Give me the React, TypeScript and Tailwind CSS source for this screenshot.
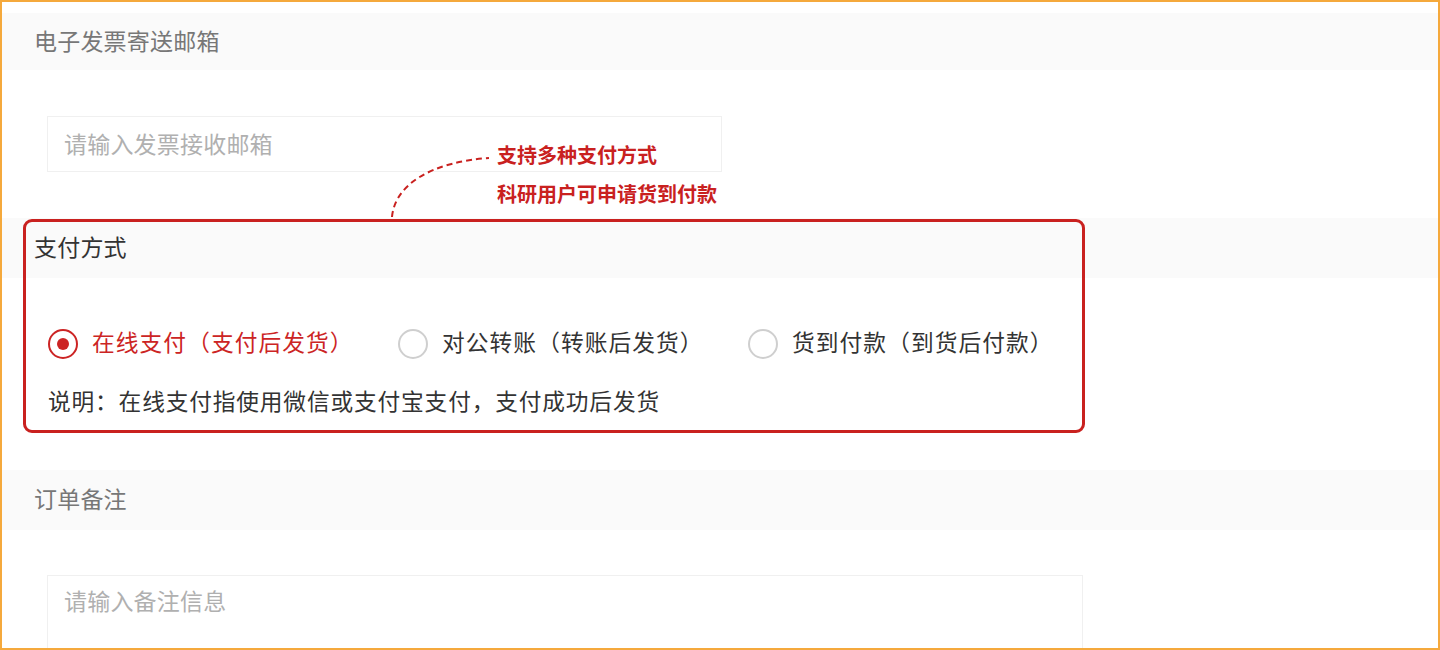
import React, { useState } from 'react';

const options = [
  { id: 'online', label: '在线支付（支付后发货）' },
  { id: 'transfer', label: '对公转账（转账后发货）' },
  { id: 'cod', label: '货到付款（到货后付款）' },
];

const SectionHeader: React.FC<{ title: string; dark?: boolean; tall?: boolean }> = ({ title, dark, tall }) => (
  <div
    className={`flex items-center bg-[#fafafa] pl-[32px] pb-[3px] ${tall ? 'h-[60px]' : 'h-[57px]'} ${
      dark ? 'text-[#333]' : 'text-[#777]'
    } text-[23px] leading-none tracking-[0.2px]`}
  >
    {title}
  </div>
);

const App: React.FC = () => {
  const [payment, setPayment] = useState('online');

  return (
    <div
      lang="zh-CN"
      className="relative w-[1440px] h-[650px] overflow-hidden border-2 border-[#f5a93c] bg-white font-['Noto_Sans_CJK_SC',sans-serif]"
    >
      {/* 电子发票 */}
      <div className="pt-[11px]">
        <SectionHeader title="电子发票寄送邮箱" />
        <div className="pl-[45px] py-[46px]">
          <input
            placeholder="请输入发票接收邮箱"
            className="w-[675px] h-[56px] border border-[#f0f0f0] px-[16px] pb-[3px] text-[23px] tracking-[0.2px] text-[#333] placeholder:text-[#b0b0b0] outline-none"
          />
        </div>
      </div>

      {/* 支付方式 */}
      <div>
        <SectionHeader title="支付方式" dark tall />
        <div className="pl-[46px] pt-[51px] pb-[52px]">
          <div className="flex">
            {options.map((opt) => {
              const active = payment === opt.id;
              return (
                <button
                  key={opt.id}
                  onClick={() => setPayment(opt.id)}
                  className="flex w-[350px] items-center gap-[14px] text-left"
                >
                  <span
                    className={`flex h-[30px] w-[30px] shrink-0 items-center justify-center rounded-full border-2 ${
                      active ? 'border-[#cc2424]' : 'border-[#cfcfcf]'
                    }`}
                  >
                    {active && <span className="h-[12px] w-[12px] rounded-full bg-[#cc2424]" />}
                  </span>
                  <span
                    className={`pb-[3px] text-[22.7px] leading-none tracking-[1.1px] ${
                      active ? 'text-[#cc2424]' : 'text-[#333]'
                    }`}
                  >
                    {opt.label}
                  </span>
                </button>
              );
            })}
          </div>
          <p className="mt-[29px] h-[30px] pb-[3px] flex items-center text-[22.7px] leading-none tracking-[0.85px] text-[#333]">
            说明：在线支付指使用微信或支付宝支付，支付成功后发货
          </p>
        </div>
      </div>

      {/* 订单备注 */}
      <div>
        <SectionHeader title="订单备注" tall />
        <div className="pl-[45px] pt-[45px]">
          <textarea
            placeholder="请输入备注信息"
            className="block w-[1036px] h-[120px] resize-none border border-[#f0f0f0] px-[16px] py-[8px] text-[23px] leading-[32px] tracking-[0.2px] text-[#333] placeholder:text-[#b0b0b0] outline-none"
          />
        </div>
      </div>

      {/* 标注框 */}
      <div className="pointer-events-none absolute left-[21px] top-[217px] h-[214px] w-[1062px] rounded-[9px] border-[3px] border-[#c9211f]" />

      {/* 标注说明 */}
      <svg className="pointer-events-none absolute left-[380px] top-[150px]" width="120" height="70" viewBox="0 0 120 70">
        <path
          d="M10 65 C 13 32, 50 10, 107 6"
          fill="none"
          stroke="#c9211f"
          strokeWidth="2"
          strokeDasharray="6 4"
        />
      </svg>
      <div className="pointer-events-none absolute left-[495px] top-[143px] flex flex-col gap-[19px] text-[20px] font-bold leading-none text-[#c9211f]">
        <span>支持多种支付方式</span>
        <span>科研用户可申请货到付款</span>
      </div>
    </div>
  );
};

export default App;
